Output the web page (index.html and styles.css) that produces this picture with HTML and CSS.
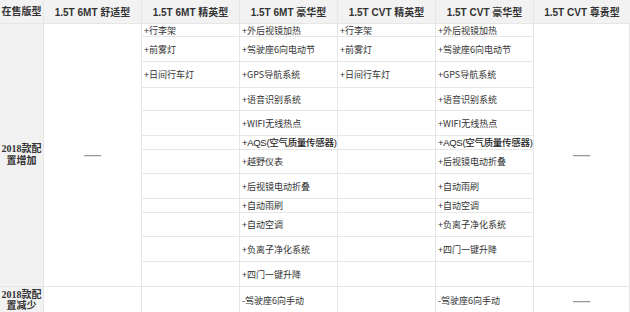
FILE: index.html
```html
<!DOCTYPE html>
<html lang="zh">
<head>
<meta charset="utf-8">
<link rel="stylesheet" href="styles.css">
</head>
<body>
<div class="spec">
  <div class="cell head side">在售版型</div>
  <div class="cell head">1.5T 6MT 舒适型</div>
  <div class="cell head">1.5T 6MT 精英型</div>
  <div class="cell head">1.5T 6MT 豪华型</div>
  <div class="cell head">1.5T CVT 精英型</div>
  <div class="cell head">1.5T CVT 豪华型</div>
  <div class="cell head">1.5T CVT 尊贵型</div>

  <div class="cell side tall">2018款配置增加</div>
  <div class="cell center tall"><span class="dash">—</span></div>
  <div class="cell item">+行李架</div>
  <div class="cell item">+外后视镜加热</div>
  <div class="cell item">+行李架</div>
  <div class="cell item">+外后视镜加热</div>
  <div class="cell center tall"><span class="dash">—</span></div>

  <div class="cell item">+前雾灯</div>
  <div class="cell item">+驾驶座6向电动节</div>
  <div class="cell item">+前雾灯</div>
  <div class="cell item">+驾驶座6向电动节</div>

  <div class="cell item">+日间行车灯</div>
  <div class="cell item">+GPS导航系统</div>
  <div class="cell item">+日间行车灯</div>
  <div class="cell item">+GPS导航系统</div>

  <div class="cell item"></div>
  <div class="cell item">+语音识别系统</div>
  <div class="cell item"></div>
  <div class="cell item">+语音识别系统</div>

  <div class="cell item"></div>
  <div class="cell item">+WIFI无线热点</div>
  <div class="cell item"></div>
  <div class="cell item">+WIFI无线热点</div>

  <div class="cell item"></div>
  <div class="cell item big">+AQS(空气质量传感器)</div>
  <div class="cell item"></div>
  <div class="cell item big">+AQS(空气质量传感器)</div>

  <div class="cell item"></div>
  <div class="cell item">+越野仪表</div>
  <div class="cell item"></div>
  <div class="cell item">+后视镜电动折叠</div>

  <div class="cell item"></div>
  <div class="cell item">+后视镜电动折叠</div>
  <div class="cell item"></div>
  <div class="cell item">+自动雨刷</div>

  <div class="cell item"></div>
  <div class="cell item">+自动雨刷</div>
  <div class="cell item"></div>
  <div class="cell item">+自动空调</div>

  <div class="cell item"></div>
  <div class="cell item">+自动空调</div>
  <div class="cell item"></div>
  <div class="cell item">+负离子净化系统</div>

  <div class="cell item"></div>
  <div class="cell item">+负离子净化系统</div>
  <div class="cell item"></div>
  <div class="cell item">+四门一键升降</div>

  <div class="cell item"></div>
  <div class="cell item">+四门一键升降</div>
  <div class="cell item"></div>
  <div class="cell item"></div>

  <div class="cell side low">2018款配置减少</div>
  <div class="cell item"></div>
  <div class="cell item"></div>
  <div class="cell item">-驾驶座6向手动</div>
  <div class="cell item"></div>
  <div class="cell item">-驾驶座6向手动</div>
  <div class="cell center"><span class="dash">—</span></div>
</div>
</body>
</html>
```

FILE: styles.css
```css
html, body {
  margin: 0;
  padding: 0;
  background: #ffffff;
}

.spec {
  display: grid;
  grid-template-columns: 44px 98px 98px 98px 98px 98px 96px;
  grid-template-rows: 24px 13px 25px 26px 23px 25px 14px 24px 25px 14px 24px 25px 25px auto;
  width: 630px;
  font-family: "Noto Sans CJK SC", "Noto Sans", sans-serif;
  color: #333333;
}

.cell {
  box-sizing: border-box;
  border-right: 1px solid #e6e6e6;
  border-bottom: 1px solid #e6e6e6;
  display: flex;
  align-items: center;
  overflow: hidden;
  white-space: nowrap;
}

.head {
  background: #f2f2f2;
  justify-content: center;
  font-family: "Liberation Sans", "Noto Sans CJK SC", sans-serif;
  font-weight: bold;
  font-size: 10px;
}

.side {
  background: #f2f2f2;
  justify-content: center;
  text-align: center;
  white-space: normal;
  font-family: "Liberation Serif", "Noto Sans CJK SC", serif;
  font-weight: bold;
  font-size: 10px;
  line-height: 12px;
  padding: 0 1px;
}

.tall {
  grid-row: span 12;
}

.low {
  padding-top: 2px;
  padding-bottom: 3px;
  line-height: 11px;
  align-items: flex-start;
}

.center {
  justify-content: center;
}

.item {
  padding-left: 2px;
  font-size: 9px;
  line-height: 11px;
}

.big {
  font-family: "Liberation Sans", "Noto Sans CJK SC", sans-serif;
  font-size: 9.5px;
  letter-spacing: -0.3px;
  font-weight: 500;
  color: #222222;
}

.dash {
  font-family: "Liberation Sans", sans-serif;
  font-size: 17px;
  line-height: 10px;
  color: #999999;
}

.spec > .cell:nth-child(7) {
  border-right: none;
}
```
